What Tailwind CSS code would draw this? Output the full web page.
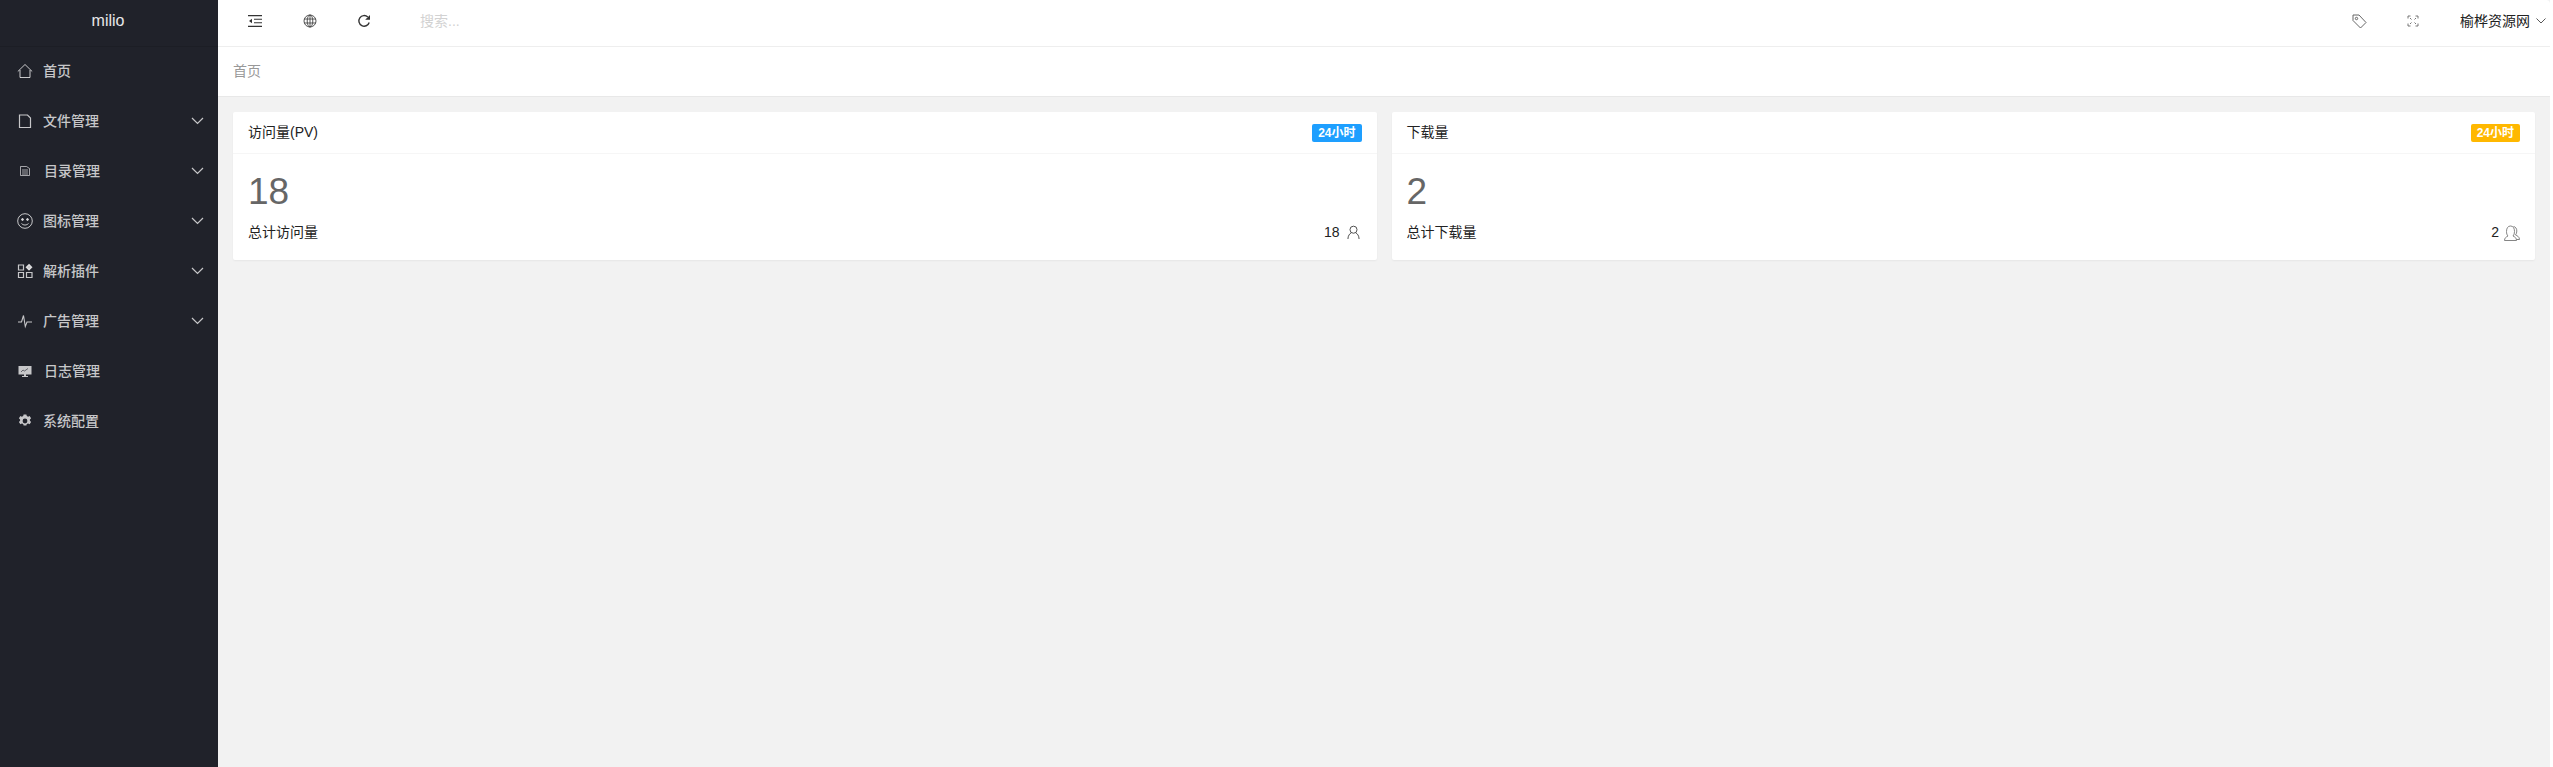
<!DOCTYPE html>
<html lang="en">
<head>
    <meta charset="utf-8"/>
    <meta content="width=device-width, initial-scale=1.0" name="viewport"/>
    <title>milio</title>
    <script src="https://cdn.jsdelivr.net/npm/@tailwindcss/browser@4"></script>
</head>
<body class="bg-white font-['Liberation_Sans','Noto_Sans_CJK_SC',sans-serif] text-[14px] text-[#222] overflow-hidden">
<div class="flex h-[767px] w-[2550px]">
    <!-- Sidebar -->
    <aside class="w-[218px] shrink-0 bg-[#20222a] text-[14px] text-white/75 font-medium">
        <div class="h-[46px] pb-[5px] pr-[2px] flex items-center justify-center text-[16px] font-normal text-white/90 shadow-[0_1px_0_#1c1e25]">milio</div>
        <nav>
            <a class="h-[50px] flex items-center pl-[17px] pr-[14px]">
                <svg class="w-[16px] h-[16px] mr-[10px]" viewBox="0 0 16 16" fill="none" stroke="currentColor" stroke-width="1"><path d="M.8 8.500 8 1.500l7.200 7M3 7v7.500h10V7"/></svg>
                <span>首页</span>
            </a>
            <a class="h-[50px] flex items-center pl-[17px] pr-[14px]">
                <svg class="w-[16px] h-[16px] mr-[10px]" viewBox="0 0 16 16" fill="none" stroke="currentColor" stroke-width="1.200"><path d="M2.500 2h8l3 3v9.500h-11z"/></svg>
                <span class="flex-1">文件管理</span>
                <svg class="w-[13px] h-[8px]" viewBox="0 0 13 8" fill="none" stroke="currentColor" stroke-width="1.200"><path d="m1 1 5.500 5.500L12 1"/></svg>
            </a>
            <a class="h-[50px] flex items-center pl-[20px] pr-[14px]">
                <svg class="w-[10px] h-[10px] mr-[14px]" viewBox="0 0 10 10" fill="none" stroke="currentColor" stroke-width=".8"><path d="M.5.500h6l3 2v7h-9zM2 4h6M2 6h6M2 8h6"/></svg>
                <span class="flex-1">目录管理</span>
                <svg class="w-[13px] h-[8px]" viewBox="0 0 13 8" fill="none" stroke="currentColor" stroke-width="1.200"><path d="m1 1 5.500 5.500L12 1"/></svg>
            </a>
            <a class="h-[50px] flex items-center pl-[17px] pr-[14px]">
                <svg class="w-[16px] h-[16px] mr-[10px]" viewBox="0 0 16 16" fill="none" stroke="currentColor" stroke-width="1"><circle cx="8" cy="8" r="7.300"/><circle cx="5.500" cy="6.500" r=".9" fill="currentColor"/><circle cx="10.500" cy="6.500" r=".9" fill="currentColor"/><path d="M4.500 10.500c2 2 5 2 7 0"/></svg>
                <span class="flex-1">图标管理</span>
                <svg class="w-[13px] h-[8px]" viewBox="0 0 13 8" fill="none" stroke="currentColor" stroke-width="1.200"><path d="m1 1 5.500 5.500L12 1"/></svg>
            </a>
            <a class="h-[50px] flex items-center pl-[17px] pr-[14px]">
                <svg class="w-[16px] h-[16px] mr-[10px]" viewBox="0 0 16 16" fill="none" stroke="currentColor" stroke-width="1.200"><path d="M1.500 2h5v5h-5zM1.500 9.500h5v5h-5zM9.500 9.500h5.500v5H9.500z"/><path d="m12 1.500 2.700 2.700-2.700 2.700-2.700-2.700z" fill="currentColor"/></svg>
                <span class="flex-1">解析插件</span>
                <svg class="w-[13px] h-[8px]" viewBox="0 0 13 8" fill="none" stroke="currentColor" stroke-width="1.200"><path d="m1 1 5.500 5.500L12 1"/></svg>
            </a>
            <a class="h-[50px] flex items-center pl-[17px] pr-[14px]">
                <svg class="w-[16px] h-[16px] mr-[10px]" viewBox="0 0 16 16" fill="none" stroke="currentColor" stroke-width="1.100"><path d="M1 9h3.500l2-6.500 1.800 11 1.700-4.500H15"/></svg>
                <span class="flex-1">广告管理</span>
                <svg class="w-[13px] h-[8px]" viewBox="0 0 13 8" fill="none" stroke="currentColor" stroke-width="1.200"><path d="m1 1 5.500 5.500L12 1"/></svg>
            </a>
            <a class="h-[50px] flex items-center pl-[18px] pr-[14px]">
                <svg class="w-[14px] h-[14px] mr-[12px]" viewBox="0 0 14 14" fill="currentColor"><path d="M.500 2h13v8.500H8v1.500h2v1H4v-1h2v-1.500H.500z"/><path d="m3 8 2-2 1.500 1L10 4.500" fill="none" stroke="#20222a" stroke-width=".6"/></svg>
                <span class="flex-1">日志管理</span>
            </a>
            <a class="h-[50px] flex items-center pl-[18px] pr-[14px]">
                <svg class="w-[14px] h-[14px] mr-[11px]" viewBox="0 0 14 14" fill="currentColor"><path fill-rule="evenodd" d="M5.600.600h2.800l.4 1.500 1.300.6 1.500-.7 1.500 2.300-1.200 1.100v1.400l1.200 1.100-1.500 2.300-1.500-.7-1.300.6-.4 1.500H5.600l-.4-1.500-1.300-.6-1.500.7-1.500-2.300 1.200-1.100V5.400L.900 4.300l1.500-2.300 1.500.7 1.300-.6zM7 4.600a2.400 2.400 0 1 0 0 4.800 2.400 2.400 0 0 0 0-4.800z"/></svg>
                <span class="flex-1">系统配置</span>
            </a>
        </nav>
    </aside>
    <!-- Main -->
    <main class="flex-1 flex flex-col bg-[#f2f2f2] min-w-0">
        <header class="h-[47px] pb-[4px] bg-white border-b border-[#eeeeee] rounded-tr-[4px] flex items-center text-[#333]">
            <svg class="w-[14px] h-[12px] ml-[30px]" viewBox="0 0 14 12" fill="none" stroke="#333" stroke-width="1.100"><path d="M0 .6h14M6 4.300h8M6 7.700h8M0 11.400h14"/><path d="M4 3.700v4.600L1 6z" fill="#333" stroke="none"/></svg>
            <svg class="w-[14px] h-[14px] ml-[41px]" viewBox="0 0 14 14" fill="none" stroke="#444" stroke-width=".9"><circle cx="7" cy="7" r="6"/><ellipse cx="7" cy="7" rx="2.800" ry="6"/><path d="M1 5h12M1 9h12M7 1v12"/></svg>
            <svg class="w-[14px] h-[14px] ml-[40px]" viewBox="0 0 14 14" fill="none" stroke="#333" stroke-width="1.400"><path d="M12.200 8.500A5.300 5.300 0 1 1 10.800 3"/><path d="M13 1v4.800H8.200z" fill="#333" stroke="none"/></svg>
            <span class="ml-[49px] text-[14px] text-[#d2d2d2]">搜索...</span>
            <svg class="w-[15px] h-[15px] ml-auto" viewBox="0 0 15 15" fill="none" stroke="#555" stroke-width=".9"><path d="M1 1h6l7 7.500-5.500 5.500L1 6.500z"/><circle cx="4.500" cy="4.500" r="1.200"/></svg>
            <svg class="w-[12px] h-[12px] ml-[40px]" viewBox="0 0 12 12" fill="none" stroke="#666" stroke-width=".9"><path d="M1 3.500V1h2.500M8.500 1H11v2.500M1 8.500V11h2.500M8.500 11H11V8.500M4.500 4.500 3 3M7.500 4.500 9 3M4.500 7.500 3 9M7.500 7.500 9 9"/></svg>
            <span class="ml-[41px] text-[14px] text-[#222]">榆桦资源网</span>
            <svg class="w-[10px] h-[6px] ml-[6px] mr-[4px]" viewBox="0 0 10 6" fill="none" stroke="#444" stroke-width=".9"><path d="m.5.500 4.500 4.500L9.500.5"/></svg>
        </header>
        <div class="h-[50px] bg-white border-b border-[#e8e8e8] flex items-center pl-[15px] text-[#999]">首页</div>
        <section class="grid grid-cols-2 gap-[15px] p-[15px]">
            <div class="h-[148px] bg-white rounded-[2px] shadow-[0_1px_2px_rgba(0,0,0,0.05)]">
                <div class="h-[42px] px-[15px] flex items-center justify-between border-b border-[#f6f6f6]">
                    <span>访问量(PV)</span>
                    <span class="h-[18px] px-[6px] rounded-[2px] bg-[#1e9fff] text-white text-[12px] font-bold leading-[18px]">24小时</span>
                </div>
                <div class="px-[15px]">
                    <p class="text-[37px] leading-[38px] text-[#666] mt-[19px]">18</p>
                    <div class="flex items-center justify-between mt-[11px]">
                        <span>总计访问量</span>
                        <span class="flex items-center">18
                            <svg class="w-[13px] h-[15px] ml-[7px] mr-[2px]" viewBox="0 0 14 15" fill="none" stroke="#444" stroke-width="1"><circle cx="7" cy="4.500" r="3.800"/><path d="M1 14.500c0-3.500 2-6 3.500-6.500M13 14.500c0-3.500-2-6-3.500-6.500"/></svg>
                        </span>
                    </div>
                </div>
            </div>
            <div class="h-[148px] bg-white rounded-[2px] shadow-[0_1px_2px_rgba(0,0,0,0.05)]">
                <div class="h-[42px] px-[15px] flex items-center justify-between border-b border-[#f6f6f6]">
                    <span>下载量</span>
                    <span class="h-[18px] px-[6px] rounded-[2px] bg-[#ffb800] text-white text-[12px] font-bold leading-[18px]">24小时</span>
                </div>
                <div class="px-[15px]">
                    <p class="text-[37px] leading-[38px] text-[#666] mt-[19px]">2</p>
                    <div class="flex items-center justify-between mt-[11px]">
                        <span>总计下载量</span>
                        <span class="flex items-center">2
                            <svg class="w-[16px] h-[16px] ml-[5px]" viewBox="0 0 16 16" fill="none" stroke="#777" stroke-width=".9"><path d="M.5 15.500c0-2.500 1.500-3.500 3.500-4.500-1-1-1.500-2.500-1.500-4.500C2.500 3 4 1 6.500 1s4 2 4 5.500c0 2-.5 3.500-1.500 4.500 2 1 3.500 2 3.500 4.500z"/><path d="M9.500 1.500c2.200.3 3.300 2.200 3.300 4.500 0 1.500-.4 3-1.300 4 1.800.8 4 1.800 4 4.500h-3"/></svg>
                        </span>
                    </div>
                </div>
            </div>
        </section>
    </main>
</div>
</body>
</html>
